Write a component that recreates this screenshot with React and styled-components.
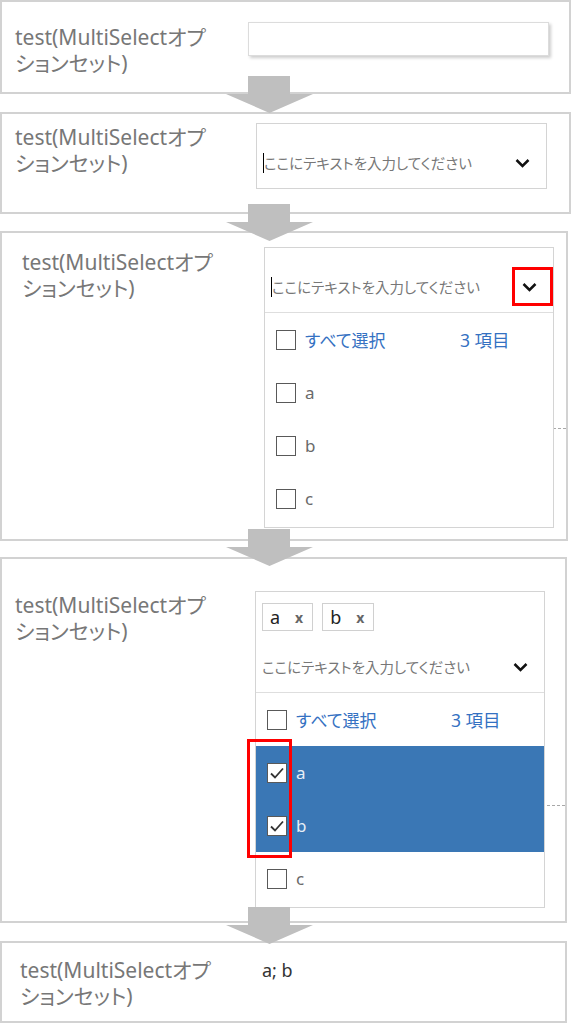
import React from 'react';
import styled, { createGlobalStyle, css } from 'styled-components';

const GlobalStyle = createGlobalStyle`
  html, body {
    margin: 0;
    padding: 0;
    background: #fff;
  }
  body {
    font-family: "Noto Sans", "Noto Sans CJK JP", sans-serif;
    font-feature-settings: "palt";
  }
`;

const Page = styled.div`
  width: 572px;
  display: flex;
  flex-direction: column;
`;

const Panel = styled.section`
  position: relative;
  box-sizing: border-box;
  width: ${(p) => p.$width}px;
  height: ${(p) => p.$height}px;
  border: 2px solid #d2d2d2;
  padding-left: ${(p) => p.$labelLeft - 2}px;
  display: flex;
  align-items: flex-start;
  background: #fff;
`;

const FieldLabel = styled.div`
  flex: 0 0 ${(p) => p.$width}px;
  margin-top: ${(p) => p.$top}px;
  font-size: 21px;
  line-height: 26px;
  color: #777;
`;

const Control = styled.div`
  position: relative;
  z-index: 1;
  margin-top: ${(p) => p.$top}px;
`;

// dashed bottom rule of the form row, mostly hidden behind the open dropdown
const DashedRule = styled.div`
  position: absolute;
  left: 280px;
  right: 0;
  top: ${(p) => p.$top}px;
  border-top: 1px dashed #a8a8a8;
  z-index: 0;
`;

const Connector = styled.div`
  position: relative;
  height: ${(p) => p.$gap}px;
  z-index: 2;
`;

const ArrowSvg = styled.svg`
  position: absolute;
  left: 226px;
  top: ${(p) => p.$offset}px;
`;

const TextInput = styled.div`
  box-sizing: border-box;
  width: 301px;
  height: 34px;
  border: 1px solid #dcdcdc;
  background: #fff;
  box-shadow: 2px 2px 3px rgba(0, 0, 0, 0.2);
`;

const Combo = styled.div`
  position: relative;
  box-sizing: border-box;
  width: ${(p) => p.$width}px;
  border: 1px solid #d4d4d4;
  background: #fff;
  ${(p) =>
    p.$open &&
    css`
      padding-bottom: 2px;
    `}
`;

const TagRow = styled.div`
  display: flex;
  gap: 9px;
  padding: ${(p) => (p.$empty ? '3px 0 0' : '11px 0 0 6px')};
`;

const Tag = styled.div`
  box-sizing: border-box;
  height: 28px;
  display: flex;
  align-items: center;
  padding: 0 9px 0 7px;
  border: 1px solid #d0d0d0;
  font-size: 18px;
  color: #222;
`;

const TagClose = styled.span`
  margin-left: 15px;
  font-size: 14px;
  font-weight: 700;
  color: #666;
`;

const InputRow = styled.div`
  box-sizing: border-box;
  height: 61px;
  display: flex;
  align-items: center;
  padding: 11px 16px 0 6px;
`;

const Caret = styled.span`
  display: inline-block;
  width: 1px;
  height: 20px;
  background: #000;
  flex: 0 0 auto;
`;

const Placeholder = styled.span`
  font-size: 14.5px;
  line-height: 22px;
  color: #777;
  white-space: nowrap;
`;

const Chevron = styled.svg`
  margin-left: auto;
  flex: 0 0 auto;
`;

const OptionList = styled.div`
  border-top: 1px solid #dedede;
`;

const OptionRow = styled.div`
  height: 53px;
  display: flex;
  align-items: center;
  padding-left: 11px;
  font-size: 17px;
  color: #6a6a6a;
  ${(p) =>
    p.$selected &&
    css`
      background: #3a77b5;
      color: #e6eef7;
    `}
`;

const CheckBox = styled.span`
  box-sizing: border-box;
  width: 20px;
  height: 20px;
  border: 1.5px solid #595959;
  background: #fff;
  display: flex;
  align-items: center;
  justify-content: center;
  flex: 0 0 auto;
`;

const OptionText = styled.span`
  margin-left: 9px;
`;

const SelectAllText = styled.span`
  margin-left: 9px;
  width: 155px;
  color: #3471c2;
`;

const CountText = styled.span`
  color: #3471c2;
  font-size: 17.5px;
`;

const Highlight = styled.div`
  position: absolute;
  box-sizing: border-box;
  left: ${(p) => p.$left}px;
  top: ${(p) => p.$top}px;
  width: ${(p) => p.$w}px;
  height: ${(p) => p.$h}px;
  border: 3px solid #f00;
  z-index: 3;
`;

const ValueText = styled.div`
  font-size: 18px;
  line-height: 26px;
  color: #333;
`;

const LABEL = (
  <>
    test(MultiSelectオプ
    <br />
    ションセット)
  </>
);

const PLACEHOLDER = 'ここにテキストを入力してください';

const Arrow = ({ gap, offset }) => (
  <Connector $gap={gap}>
    <ArrowSvg $offset={offset} width="87" height="37" viewBox="0 0 87 37">
      <polygon points="22,0 64,0 64,18 87,18 43.5,37 0,18 22,18" fill="#bfbfbf" />
    </ArrowSvg>
  </Connector>
);

const ChevronIcon = () => (
  <Chevron width="15" height="10" viewBox="0 0 15 10">
    <polyline points="1.5,2 7.5,8 13.5,2" fill="none" stroke="#111" strokeWidth="2.5" />
  </Chevron>
);

const CheckMark = () => (
  <svg width="16" height="14" viewBox="0 0 16 14">
    <polyline points="2,7.5 6,11.5 14,2.5" fill="none" stroke="#333" strokeWidth="1.8" />
  </svg>
);

const options = ['a', 'b', 'c'];

const Options = ({ selected }) => (
  <OptionList>
    <OptionRow>
      <CheckBox />
      <SelectAllText>すべて選択</SelectAllText>
      <CountText>3 項目</CountText>
    </OptionRow>
    {options.map((o) => (
      <OptionRow key={o} $selected={selected.includes(o)}>
        <CheckBox>{selected.includes(o) && <CheckMark />}</CheckBox>
        <OptionText>{o}</OptionText>
      </OptionRow>
    ))}
  </OptionList>
);

const App = () => (
  <Page>
    <GlobalStyle />

    <Panel $width={571} $height={94} $labelLeft={15}>
      <FieldLabel $width={233} $top={22}>{LABEL}</FieldLabel>
      <Control $top={20}>
        <TextInput />
      </Control>
    </Panel>

    <Arrow gap={18} offset={-18} />

    <Panel $width={571} $height={102} $labelLeft={15}>
      <FieldLabel $width={241} $top={10}>{LABEL}</FieldLabel>
      <Control $top={9}>
        <Combo $width={291}>
          <TagRow $empty />
          <InputRow>
            <Caret />
            <Placeholder>{PLACEHOLDER}</Placeholder>
            <ChevronIcon />
          </InputRow>
        </Combo>
      </Control>
    </Panel>

    <Arrow gap={17} offset={-10} />

    <Panel $width={568} $height={310} $labelLeft={22}>
      <DashedRule $top={195} />
      <FieldLabel $width={242} $top={16}>{LABEL}</FieldLabel>
      <Control $top={14}>
        <Combo $width={290} $open>
          <TagRow $empty />
          <InputRow>
            <Caret />
            <Placeholder>{PLACEHOLDER}</Placeholder>
            <ChevronIcon />
          </InputRow>
          <Options selected={[]} />
          <Highlight $left={247} $top={19} $w={41} $h={39} />
        </Combo>
      </Control>
    </Panel>

    <Arrow gap={16} offset={-12} />

    <Panel $width={567} $height={366} $labelLeft={15}>
      <DashedRule $top={246} />
      <FieldLabel $width={240} $top={33}>{LABEL}</FieldLabel>
      <Control $top={32}>
        <Combo $width={290} $open>
          <TagRow>
            <Tag>
              a<TagClose>x</TagClose>
            </Tag>
            <Tag>
              b<TagClose>x</TagClose>
            </Tag>
          </TagRow>
          <InputRow>
            <Placeholder>{PLACEHOLDER}</Placeholder>
            <ChevronIcon />
          </InputRow>
          <Options selected={['a', 'b']} />
          <Highlight $left={-9} $top={147} $w={45} $h={119} />
        </Combo>
      </Control>
    </Panel>

    <Arrow gap={18} offset={-16} />

    <Panel $width={567} $height={82} $labelLeft={20}>
      <FieldLabel $width={242} $top={14}>{LABEL}</FieldLabel>
      <Control $top={14}>
        <ValueText>a; b</ValueText>
      </Control>
    </Panel>
  </Page>
);

export default App;
